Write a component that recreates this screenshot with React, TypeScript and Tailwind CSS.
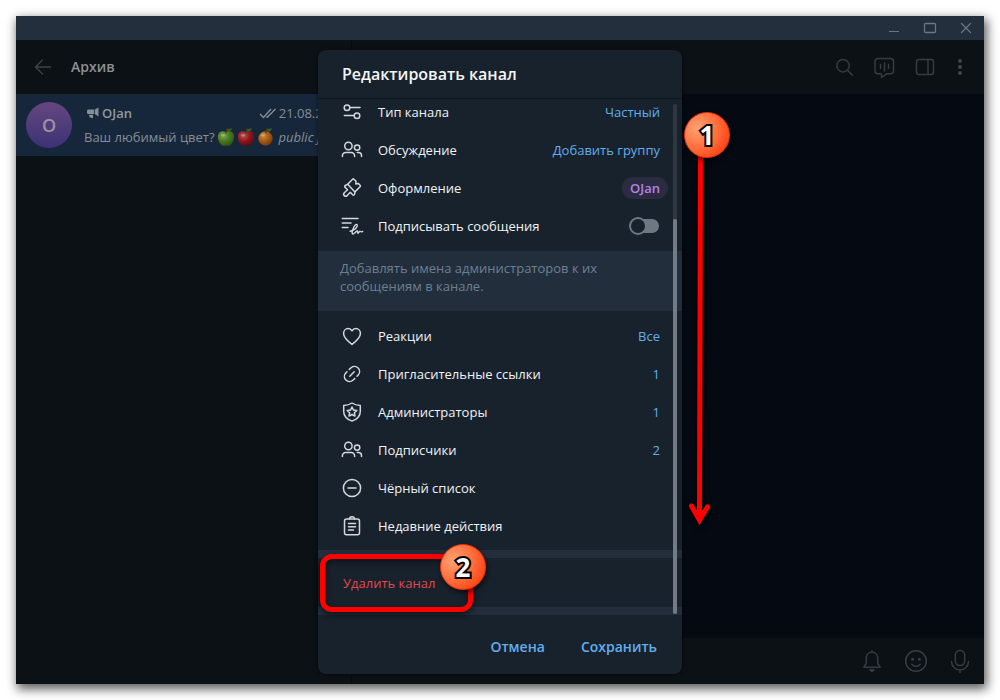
import type { ReactNode } from 'react';

function Icon({ children, className = 'size-6 text-[#d3d8dc]' }: { children: ReactNode; className?: string }) {
  return (
    <svg
      viewBox="0 0 24 24"
      fill="none"
      stroke="currentColor"
      strokeWidth="1.5"
      strokeLinecap="round"
      strokeLinejoin="round"
      aria-hidden="true"
      className={`shrink-0 ${className}`}
    >
      {children}
    </svg>
  );
}

const TypeIcon = () => (
  <Icon>
    <circle cx="7" cy="7.7" r="2.8" />
    <path d="M10 7.5h10M4.3 15.5H14" />
    <circle cx="17" cy="15.7" r="2.8" />
  </Icon>
);

const PeopleIcon = () => (
  <Icon>
    <circle cx="8.4" cy="8" r="3.7" />
    <circle cx="17.1" cy="9.6" r="2.7" />
    <path d="M2.4 18.6v-.9a3.2 3.2 0 0 1 3.2-3.2h5.8a3.2 3.2 0 0 1 3.2 3.2v.9M17.2 14.5h1.3a3 3 0 0 1 3 3v1.1" />
  </Icon>
);

const BrushIcon = () => (
  <Icon>
    <path d="M7.700 8.300 12.600 3.200a1 1 0 0 1 1.400 0l2 2-.2 2.800 2.400-.6 1.900 1.900a1 1 0 0 1 0 1.400l-5.200 5.200z" />
    <path d="M7.700 8.300 5.300 9.500a1.200 1.200 0 0 0-.2 1.900l2.500 2.300-3.300 3a2 2 0 0 0 2.900 2.900l3.100-3.300 2.300 2.500a1.200 1.200 0 0 0 1.900-.3l.4-2.600" />
  </Icon>
);

const SignatureIcon = () => (
  <Icon>
    <path d="M2.300 4.500H18M2.300 9H11M2.300 13.500H8" />
    <path
      d="M10.200 17.200c3.300-.9 6.500-3.200 7-5.400.3-1.600-1.200-1.900-2.300-.4-1.500 2.100-3.600 7-2.400 8.400 1.100 1.100 3.300-2.300 4.500-2.800 1.100-.4.100 2 .9 2.200.9.200 1.400-2.200 2.300-1.900.7.200.3 1.200 2.500.1"
      strokeWidth="1.400"
    />
  </Icon>
);

const HeartIcon = () => (
  <Icon>
    <path d="M12 20.4C8 17.3 3.6 13.7 3.6 9.4c0-2.8 2.1-4.8 4.5-4.8 1.7 0 3.1.8 3.9 2.2.8-1.4 2.2-2.2 3.9-2.2 2.4 0 4.5 2 4.5 4.8 0 4.3-4.4 7.9-8.4 11z" />
  </Icon>
);

const LinkIcon = () => (
  <Icon>
    <path d="m9.3 7.4 1.8-1.7a5.1 5.1 0 0 1 7.2 7.2l-1.3 1.4M14.7 16.6l-1.8 1.7a5.1 5.1 0 0 1-7.2-7.2L7 9.7M9.8 14.2l4.4-4.4" />
  </Icon>
);

const ShieldIcon = () => (
  <Icon>
    <path d="M12 3c2.400 1.600 5.200 2.300 8.300 2.400v6c0 4.300-3.200 7.700-8.300 9.700-5.100-2-8.300-5.400-8.300-9.700v-6C6.800 5.300 9.600 4.600 12 3z" />
    <path d="m12 7 1.500 3.100 3.300.4-2.400 2.300.6 3.300-3-1.600-3 1.600.6-3.300-2.400-2.300 3.300-.4z" />
  </Icon>
);

const BlockIcon = () => (
  <Icon>
    <circle cx="12" cy="12" r="8.600" />
    <path d="M8 12h8" />
  </Icon>
);

const ClipboardIcon = () => (
  <Icon>
    <rect x="4.500" y="5" width="15" height="15.700" rx="2" />
    <path d="M9.500 5a2.500 2.200 0 0 1 5 0M8.500 9.500h7M8.500 12.700h7M8.500 16h5" />
  </Icon>
);

function Row({ icon, label, value }: { icon: ReactNode; label: string; value?: string }) {
  return (
    <button type="button" className="flex h-[38px] w-full items-center gap-3.5 px-[22px] text-left">
      {icon}
      <span className="flex-1 text-[#f0f3f5]">{label}</span>
      {value && <span className="text-[#62aeec]">{value}</span>}
    </button>
  );
}

function Badge({ n, className }: { n: number; className: string }) {
  return (
    <span
      className={`absolute flex size-[46px] items-center justify-center rounded-full border border-[#e8330c] bg-[radial-gradient(circle_at_28%_35%,#ffa272,#ff6a38_50%,#ff3000_95%)] text-[26px] leading-none font-bold text-white shadow-[1px_3px_5px_rgba(0,0,0,0.6)] [-webkit-text-stroke:4px_#000] [paint-order:stroke_fill] ${className}`}
    >
      {n}
    </span>
  );
}

function Fruit({ kind }: { kind: 'green' | 'red' | 'orange' }) {
  const tones = {
    green: ['#85a558', '#4a7a20', '#2c5414'],
    red: ['#b95a5a', '#93161e', '#560d12'],
    orange: ['#cc9048', '#ac5a12', '#70390e'],
  }[kind];
  return (
    <svg viewBox="0 0 18 20" className="h-5 w-[18px] shrink-0" role="img" aria-label={kind}>
      <defs>
        <radialGradient id={`fruit-${kind}`} cx=".35" cy=".3" r=".75">
          <stop offset="0" stopColor={tones[0]} />
          <stop offset=".5" stopColor={tones[1]} />
          <stop offset="1" stopColor={tones[2]} />
        </radialGradient>
      </defs>
      {kind === 'orange' ? (
        <circle cx="8.500" cy="11.500" r="7.200" fill={`url(#fruit-${kind})`} />
      ) : (
        <path
          d="M9 5.200c2.200-1.300 5.600-1.300 7.200 1 1.700 2.600.9 7.200-1.300 10.200-1.600 2.200-3.800 2.900-5.900 2-2.100.9-4.300.2-5.900-2C.900 13.400.100 8.800 1.800 6.200 3.400 3.900 6.800 3.900 9 5.200z"
          fill={`url(#fruit-${kind})`}
        />
      )}
      <path d="M8.800 6.500C8.800 4.500 9.200 3 10.500 1.500" stroke="#4b3a20" strokeWidth="1.200" fill="none" />
      <path d="M9.500 4.500c.5-2.500 2.500-3.500 5.500-3-.8 2.500-3 3.700-5.500 3z" fill="#3c6220" />
      <ellipse cx="6" cy="8.300" rx="2.200" ry="1.300" fill="#ffffff" opacity=".22" />
    </svg>
  );
}

const toolIcon = 'size-6 text-[#353c42]';

export default function App() {
  return (
    <div className="flex min-h-screen bg-white p-4 font-['Open_Sans',sans-serif] text-[13px] leading-[18px]">
      <div className="flex flex-1 flex-col bg-[#0c1115] shadow-[2px_4px_10px_1px_rgba(0,0,0,0.65)]">
        <div className="flex h-6 shrink-0 items-center justify-end gap-3 bg-[#242f3d] pr-1.5 text-[#6b7680]">
          <button type="button" aria-label="Свернуть">
            <Icon className="size-6">
              <path d="M7 15.500h10" strokeWidth="1" strokeLinecap="butt" />
            </Icon>
          </button>
          <button type="button" aria-label="Развернуть">
            <Icon className="size-6">
              <rect x="6.500" y="7.500" width="11" height="9" rx="1" strokeWidth="1.300" />
            </Icon>
          </button>
          <button type="button" aria-label="Закрыть">
            <Icon className="size-6">
              <path d="m7.500 7.500 9 9m0-9-9 9" strokeWidth="1.200" />
            </Icon>
          </button>
        </div>

        <div className="relative flex flex-1">
          <aside className="w-[336px] shrink-0 border-r border-[#080b0e]">
            <div className="flex h-[54px] items-center gap-4 pl-[15px]">
              <button type="button" aria-label="Назад">
                <Icon className="size-6 text-[#3d444a]">
                  <path d="M19.500 12H4.500m7-7-7 7 7 7" strokeWidth="1.300" />
                </Icon>
              </button>
              <h1 className="text-[14px] font-semibold text-[#8d9194]">Архив</h1>
            </div>
            <a href="#ojan" className="flex h-[62px] items-center gap-3 bg-[#17273b] pl-2.5">
              <span className="flex size-[46px] shrink-0 items-center justify-center rounded-full bg-linear-to-b from-[#66467f] to-[#3c3275] text-[18px] font-semibold text-[#9a959f]">
                O
              </span>
              <span className="flex min-w-0 flex-1 flex-col gap-1 text-[#858d96]">
                <span className="flex h-5 items-center pl-[3px]">
                  <svg viewBox="0 0 12 12" className="mr-[3px] size-3" fill="currentColor" aria-hidden="true">
                    <path d="M0 4C0 3 .7 2.500 1.500 2.500H7v4.500H1.500C.7 7 0 6.500 0 5.500zM7.800 2.500 11.500.5v9L7.800 7zM2 7.800h4V11H4.500C3 11 2 9.500 2 7.800z" />
                  </svg>
                  <span className="flex-1 font-semibold text-[#91979d]">OJan</span>
                  <svg viewBox="0 0 18 12" className="mr-0.5 h-3 w-[18px]" fill="none" stroke="currentColor" strokeWidth="1.400" aria-hidden="true">
                    <path d="m1 7 3.500 3.500L12 2M8 10.500 16.500 2M7.500 9.500l1 1" />
                  </svg>
                  <time className="pr-1.5">21.08.2023</time>
                </span>
                <span className="flex h-5 items-center gap-0.5 overflow-hidden whitespace-nowrap">
                  <span>Ваш любимый цвет?</span>
                  <Fruit kind="green" />
                  <Fruit kind="red" />
                  <Fruit kind="orange" />
                  <em className="pl-0.5">public join</em>
                </span>
              </span>
            </a>
          </aside>

          <main className="flex flex-1 flex-col">
            <header className="flex h-[54px] items-center justify-end gap-4 pr-3">
              <button type="button" aria-label="Поиск">
                <Icon className={toolIcon}>
                  <circle cx="11" cy="10.700" r="6.200" />
                  <path d="m15.500 15.200 4.900 4.900" />
                </Icon>
              </button>
              <button type="button" aria-label="Трансляция">
                <Icon className={toolIcon}>
                  <path d="M6 3.500h12.500a3 3 0 0 1 3 3v9.300a3 3 0 0 1-3 3h-4l-4.800 3.700-.4-3.700H6a3 3 0 0 1-3-3V6.500a3 3 0 0 1 3-3zM8.500 9.500v4M12.500 8v8M16.500 9.500v4" />
                </Icon>
              </button>
              <button type="button" aria-label="Панель">
                <Icon className={toolIcon}>
                  <rect x="4.500" y="4.500" width="17" height="15" rx="2.500" />
                  <path d="M16 4.500v15" />
                </Icon>
              </button>
              <button type="button" aria-label="Меню" className="-ml-1">
                <Icon className="size-6 text-[#3d444a]">
                  <g fill="currentColor" stroke="none">
                    <circle cx="12" cy="6" r="2.100" />
                    <circle cx="12" cy="12" r="2.100" />
                    <circle cx="12" cy="18" r="2.100" />
                  </g>
                </Icon>
              </button>
            </header>
            <div className="flex-1 bg-[#050911]" />
            <footer className="flex h-[47px] items-center justify-end gap-5 border-t border-[#080b0e] pr-3">
              <button type="button" aria-label="Уведомления">
                <Icon className={toolIcon}>
                  <path d="M12 3.300c-3.500 0-5.700 2.500-5.700 6V14c0 1.600-2.500 2.700-2.500 4.300h16.400c0-1.600-2.500-2.700-2.500-4.300V9.300c0-3.500-2.200-6-5.700-6zM12 2v1" />
                  <path d="M10 20.800h4l-2 1.500z" fill="currentColor" />
                </Icon>
              </button>
              <button type="button" aria-label="Эмодзи">
                <Icon className={toolIcon}>
                  <circle cx="12" cy="12" r="10.300" />
                  <path d="M7.700 15.200c2.300 2.700 6.300 2.700 8.600 0" />
                  <circle cx="8.600" cy="10.300" r=".8" fill="currentColor" />
                  <circle cx="15.400" cy="10.300" r=".8" fill="currentColor" />
                </Icon>
              </button>
              <button type="button" aria-label="Голосовое сообщение">
                <Icon className={toolIcon}>
                  <rect x="7.300" y="1.500" width="9.400" height="15" rx="4.700" />
                  <path d="M3.500 12.500a8.500 8.500 0 0 0 17 0M12 21v2.500" />
                </Icon>
              </button>
            </footer>
          </main>

          <div className="absolute inset-0 flex items-center justify-center py-2.5">
            <section
              role="dialog"
              aria-labelledby="dialog-title"
              className="relative flex w-[364px] flex-col rounded-lg bg-[#18222c] shadow-[0_1px_4px_rgba(0,0,0,0.5)]"
            >
              <h2 id="dialog-title" className="flex h-[49px] items-center border-b border-[#111920] px-6 text-[16px] font-semibold text-[#f2f5f7]">
                Редактировать канал
              </h2>

              <div className="relative overflow-hidden">
                <div className="-mt-1.5">
                  <div className="pb-1.5">
                    <Row icon={<TypeIcon />} label="Тип канала" value="Частный" />
                    <Row icon={<PeopleIcon />} label="Обсуждение" value="Добавить группу" />
                    <button type="button" className="flex h-[38px] w-full items-center gap-3.5 pr-3.5 pl-[22px] text-left">
                      <BrushIcon />
                      <span className="flex-1 text-[#f0f3f5]">Оформление</span>
                      <span className="rounded-full bg-[#2b2c42] px-2 py-0.5 font-semibold text-[#b083e6]">OJan</span>
                    </button>
                    <label className="flex h-[38px] items-center gap-3.5 pr-[23px] pl-[22px]">
                      <SignatureIcon />
                      <span className="flex-1 text-[#f0f3f5]">Подписывать сообщения</span>
                      <input
                        type="checkbox"
                        role="switch"
                        className="relative h-3.5 w-[30px] appearance-none rounded-full bg-[linear-gradient(90deg,transparent_9px,#6c7883_9px)] before:absolute before:-top-0.5 before:left-0 before:size-[18px] before:rounded-full before:border-2 before:border-[#6c7883] before:bg-[#18222c]"
                      />
                    </label>
                  </div>

                  <p className="h-[60px] bg-[#232e3c] px-[22px] pt-2 text-[#6c8093]">
                    Добавлять имена администраторов к их сообщениям в канале.
                  </p>

                  <div className="pt-1.5 pb-[5px]">
                    <Row icon={<HeartIcon />} label="Реакции" value="Все" />
                    <Row icon={<LinkIcon />} label="Пригласительные ссылки" value="1" />
                    <Row icon={<ShieldIcon />} label="Администраторы" value="1" />
                    <Row icon={<PeopleIcon />} label="Подписчики" value="2" />
                    <Row icon={<BlockIcon />} label="Чёрный список" />
                    <Row icon={<ClipboardIcon />} label="Недавние действия" />
                  </div>

                  <div className="border-y-8 border-[#232e3c]">
                    <button type="button" className="flex h-[49px] w-full items-center px-[25px] text-[#e2484d]">
                      Удалить канал
                    </button>
                  </div>
                </div>

                <div className="absolute top-[5px] right-[5px] bottom-px w-1 rounded-full bg-white/10">
                  <div className="mt-[115px] h-[395px] rounded-full bg-[#737c85]" />
                </div>
              </div>

              <div className="flex h-[59px] items-center justify-end gap-9 px-[25px] pt-1 text-[14px] font-semibold text-[#62aeec]">
                <button type="button">Отмена</button>
                <button type="button">Сохранить</button>
              </div>

              <svg
                viewBox="0 0 30 380"
                className="pointer-events-none absolute top-[100px] left-[366px] h-[380px] w-[30px] overflow-visible drop-shadow-[1px_3px_3px_rgba(0,0,0,0.7)]"
                fill="none"
                stroke="#ff0000"
                strokeWidth="5"
                strokeLinecap="round"
                aria-hidden="true"
              >
                <path d="M16.500 4 15.500 362" strokeLinecap="butt" />
                <path d="m7.500 356 8 14 8-13" />
                <path d="m7.500 356 8 6 8-5-8 18z" fill="#ff0000" stroke="none" />
              </svg>
              <div className="pointer-events-none absolute top-[504px] left-0.5 h-[58px] w-[153px] rounded-xl border-5 border-[#ff0000] shadow-[0_3px_6px_rgba(0,0,0,0.6),inset_0_3px_6px_rgba(0,0,0,0.5)]" />
              <Badge n={1} className="top-[62px] left-[366px]" />
              <Badge n={2} className="top-[494px] left-[122px]" />
            </section>
          </div>
        </div>
      </div>
    </div>
  );
}
